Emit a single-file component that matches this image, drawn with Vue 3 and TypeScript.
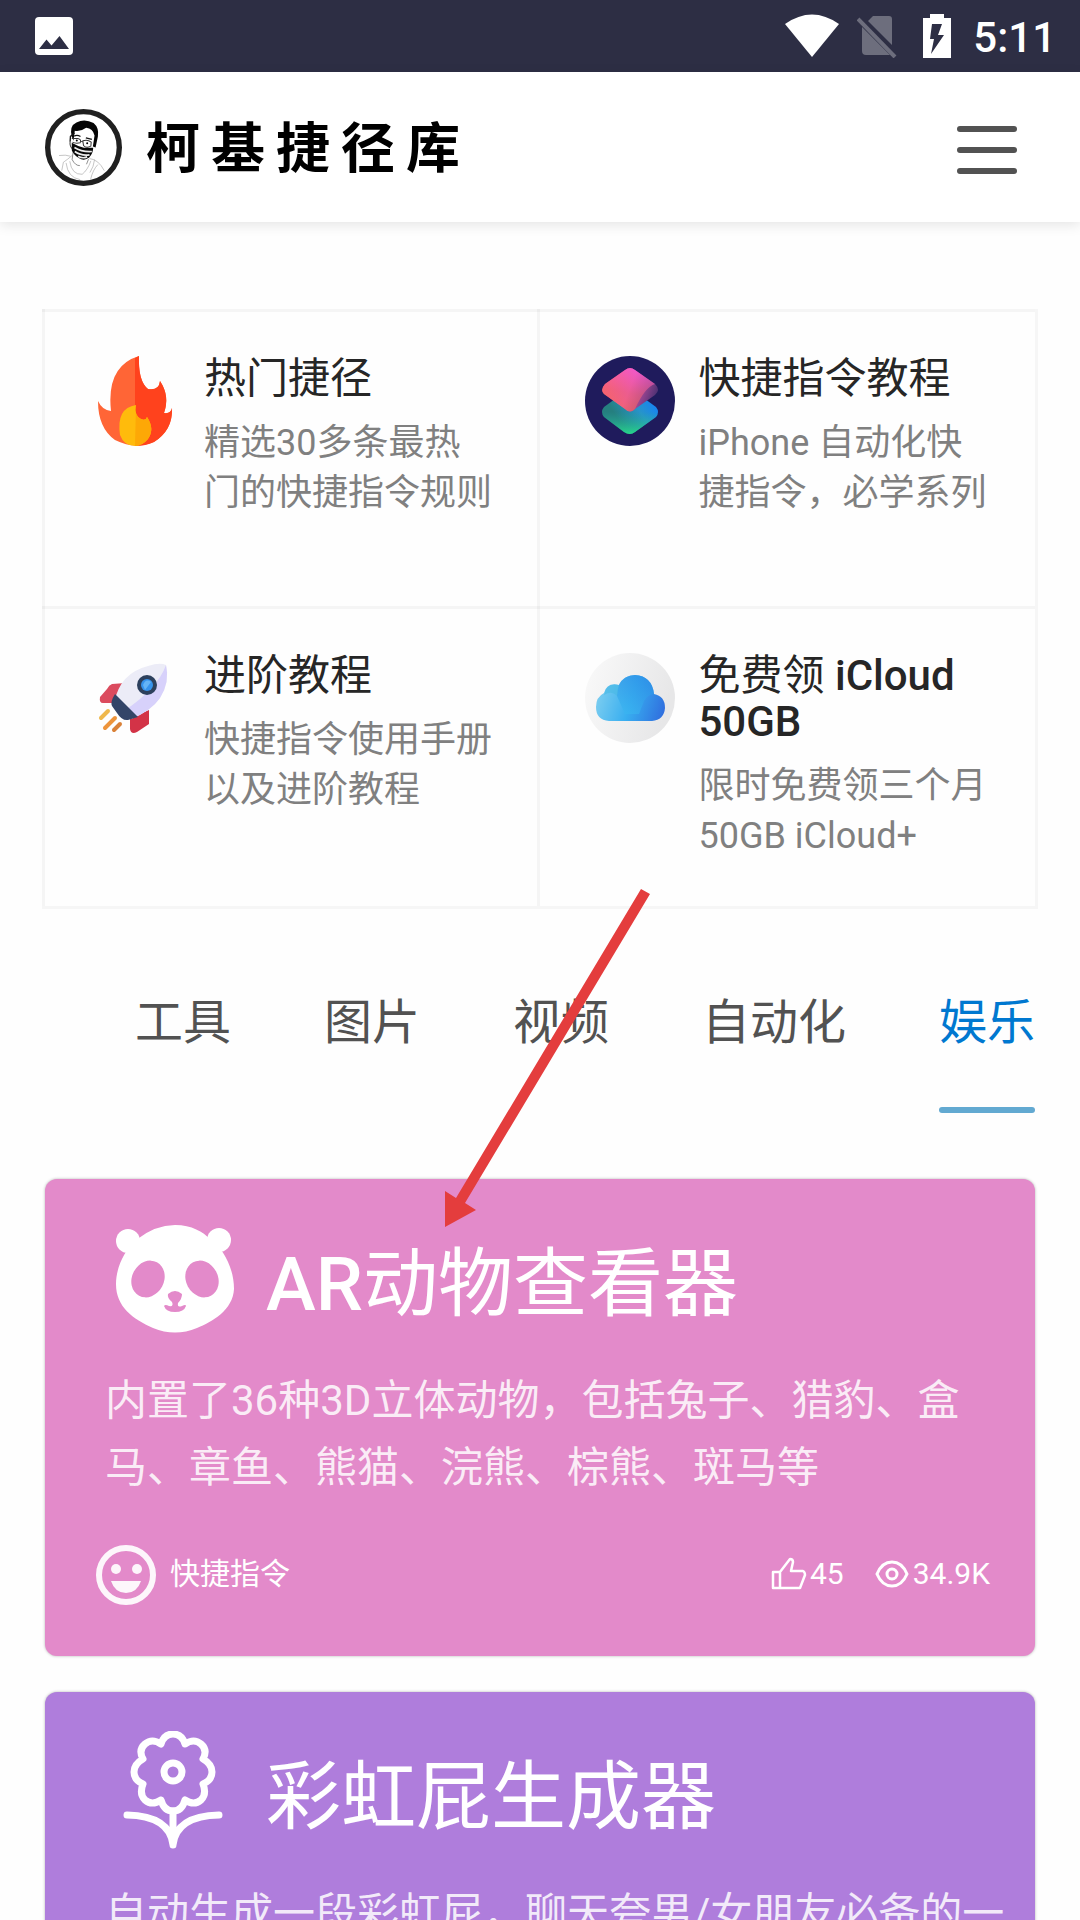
<script setup lang="ts">
import { ref } from 'vue'

interface TextPart {
  text: string
  latin?: boolean
}

interface Guide {
  icon: 'fire' | 'shortcuts' | 'rocket' | 'icloud'
  title: TextPart[]
  desc: string
}

interface Shortcut {
  icon: 'panda' | 'flower'
  tone: 'pink' | 'purple'
  title: TextPart[]
  desc: string
  author?: string
  likes?: string
  views?: string
}

const brand: string[] = ['柯', '基', '捷', '径', '库']

const guides: Guide[] = [
  { icon: 'fire', title: [{ text: '热门捷径' }], desc: '精选30多条最热门的快捷指令规则' },
  { icon: 'shortcuts', title: [{ text: '快捷指令教程' }], desc: 'iPhone 自动化快捷指令，必学系列' },
  { icon: 'rocket', title: [{ text: '进阶教程' }], desc: '快捷指令使用手册以及进阶教程' },
  {
    icon: 'icloud',
    title: [{ text: '免费领 ' }, { text: 'iCloud ', latin: true }, { text: '50GB', latin: true }],
    desc: '限时免费领三个月 50GB iCloud+',
  },
]

const tabs: string[] = ['工具', '图片', '视频', '自动化', '娱乐']
const activeTab = ref('娱乐')

const shortcuts: Shortcut[] = [
  {
    icon: 'panda',
    tone: 'pink',
    title: [{ text: 'AR', latin: true }, { text: '动物查看器' }],
    desc: '内置了36种3D立体动物，包括兔子、猎豹、盒马、章鱼、熊猫、浣熊、棕熊、斑马等',
    author: '快捷指令',
    likes: '45',
    views: '34.9K',
  },
  {
    icon: 'flower',
    tone: 'purple',
    title: [{ text: '彩虹屁生成器' }],
    desc: '自动生成一段彩虹屁，聊天夸男/女朋友必备的一',
  },
]
</script>

<template>
  <div class="page">
    <div class="status">
      <svg class="status-photo" viewBox="0 0 38 38" aria-hidden="true">
        <rect width="38" height="38" rx="4" fill="#fff" />
        <path d="M4 32 11.500 22.500 16.500 28.500 24.500 19 34 32Z" fill="#2d2e44" />
      </svg>
      <div class="status-right">
        <svg class="wifi" viewBox="0 0 54 44" aria-hidden="true">
          <path d="M0 10Q27-9 54 10L27 43Z" fill="#fff" />
        </svg>
        <svg class="sim" viewBox="0 0 40 44" aria-hidden="true">
          <path d="M11 7 16 2H32Q35 2 35 5V31ZM5 13 33 41H9Q5 41 5 37Z" fill="#6d6e7d" />
          <path d="M1 5 38 43" stroke="#6d6e7d" stroke-width="4" />
        </svg>
        <svg class="battery" viewBox="0 0 28 44" aria-hidden="true">
          <path d="M7 0H21V4H28V44H0V4H7Z" fill="#fff" />
          <path d="M9 10H19L15 21H21L8 40 11 25H7Z" fill="#2d2e44" />
        </svg>
        <span class="clock">5:11</span>
      </div>
    </div>

    <header class="header">
      <a class="brand" href="#">
        <svg class="avatar" viewBox="0 0 230 230" aria-hidden="true">
          <circle cx="115" cy="115" r="107" fill="#fff" stroke="#202020" stroke-width="16" />
          <path d="M42 139Q62 136 76 141M82 138Q66 152 55 159L50 184M133 148Q160 151 177 184M148 151Q146 172 134 190M74 156Q80 197 111 195 127 183 137 155M63 161Q68 205 105 211M158 166Q143 181 136 211" fill="none" stroke="#aaa" stroke-width="2" />
          <path d="M84 129 81 151Q91 170 104 169M130 150 124 165" fill="none" stroke="#555" stroke-width="2" />
          <path d="M80 82Q72 50 94 40 119 28 145 42 162 56 158 82L151 115 143 112 148 79Q143 58 123 56 107 68 89 65L85 95Z" fill="#050505" />
          <path d="M75 98 76 82 88 72M87 81Q96 76 106 82M122 86 140 91" fill="none" stroke="#151515" stroke-width="4" />
          <path d="M75 98Q73 112 83 120M80 88H98Q110 91 105 101 91 104 82 99M113 95Q127 90 138 99L137 111Q123 118 115 109ZM106 96 114 99" fill="none" stroke="#333" stroke-width="3" />
          <circle cx="95" cy="94" r="3" /><circle cx="126" cy="102" r="3" />
          <path d="M80 101Q99 112 116 116L144 116Q144 132 132 145 116 157 101 146 84 136 80 123Z" fill="#080808" />
          <path d="M88 115Q110 129 140 127M89 127Q109 141 133 137M99 141Q112 149 126 143" stroke="#eee" stroke-width="5" fill="none" />
        </svg>
        <span class="brand-name"><span v-for="char in brand" :key="char">{{ char }}</span></span>
      </a>
      <button class="menu" type="button" aria-label="菜单">
        <span></span><span></span><span></span>
      </button>
    </header>

    <main class="main">
      <section class="guides">
        <a v-for="guide in guides" :key="guide.icon" class="guide" href="#">
          <svg v-if="guide.icon === 'fire'" class="guide-icon" viewBox="0 0 90 90" aria-hidden="true">
            <path d="M49 0Q48 25 58 33 69 35 70 25 80 40 74 57 81 58 82 52 83 74 64 86 45 94 25 84 8 72 8 45 12 54 21 55 16 10 49 0Z" fill="#ff6536" />
            <path d="M49 0Q48 25 58 33 69 35 70 25 80 40 74 57 81 58 82 52 83 74 64 86 56 90 45 90V2Z" fill="#ff421d" />
            <path d="M46 49Q44 60 51 63 56 65 57 61 65 73 58 83 52 90 45 90 34 90 30 79 26 52 46 49Z" fill="#ffbb0c" />
            <path d="M46 49Q44 60 51 63 56 65 57 61 65 73 58 83 52 90 45 90Z" fill="#fda806" />
          </svg>
          <svg v-else-if="guide.icon === 'shortcuts'" class="guide-icon" viewBox="0 0 90 90" aria-hidden="true">
            <defs>
              <linearGradient id="sc-top" x1="0" y1="0.300" x2="1" y2="0.600">
                <stop offset="0" stop-color="#ff6658" /><stop offset="0.500" stop-color="#e557ad" /><stop offset="1" stop-color="#473071" />
              </linearGradient>
              <linearGradient id="sc-warm" x1="0.500" y1="0" x2="0.300" y2="1">
                <stop offset="0" stop-color="#f858df" /><stop offset="0.550" stop-color="#f0607c" /><stop offset="1" stop-color="#fb6a50" />
              </linearGradient>
              <linearGradient id="sc-bottom" x1="1" y1="0.200" x2="0.250" y2="0.600">
                <stop offset="0" stop-color="#117dff" /><stop offset="0.500" stop-color="#2794ca" /><stop offset="1" stop-color="#257f7f" />
              </linearGradient>
              <linearGradient id="sc-green" x1="0.500" y1="0.500" x2="0.500" y2="1">
                <stop offset="0" stop-color="#25a9a0" stop-opacity="0" /><stop offset="1" stop-color="#27d789" />
              </linearGradient>
            </defs>
            <circle cx="45" cy="45" r="45" fill="#1f1b5c" />
            <path d="M41 35Q45 32 49 35L71 51Q75 56 71 61L50 76Q45 80 39 76L19 61Q15 56 19 51Z" fill="url(#sc-bottom)" />
            <path d="M41 35Q45 32 49 35L71 51Q75 56 71 61L50 76Q45 80 39 76L19 61Q15 56 19 51Z" fill="url(#sc-green)" />
            <path d="M40 14Q45 10 50 14L70 28Q76 34 70 39L50 53Q45 58 40 53L19 38Q15 34 20 28Z" fill="url(#sc-top)" />
            <path d="M40 14Q45 10 50 14L70 28Q60 31 50 53 45 58 40 53L19 38Q15 34 20 28Z" fill="url(#sc-warm)" opacity="0.600" />
          </svg>
          <svg v-else-if="guide.icon === 'rocket'" class="guide-icon" viewBox="0 0 90 90" aria-hidden="true">
            <path d="M36 30 22 31Q19 32 17 36L10 44Q9 50 13 50L24 50Z" fill="#db4b5e" />
            <path d="M59 57V71L47 79Q41 82 40 76L40 65Z" fill="#d33347" />
            <path d="M24 50Q30 20 58 13 70 9 76 12 80 29 70 45 61 58 41 66Z" fill="#ececf7" />
            <path d="M76 12Q80 29 70 45 61 58 41 66L34 58Q68 35 76 12Z" fill="#d7d1fb" />
            <path d="M25 41 48 64 38 67Q32 68 27 60L22 53Q20 49 25 41Z" fill="#334568" />
            <circle cx="57" cy="32" r="10" fill="#2d405d" />
            <circle cx="57" cy="32" r="6" fill="#3793ed" />
            <path d="M53 32Q56 25 61 29L55 37Z" fill="#65b4f6" />
            <path d="M18 58 11 65" stroke="#efb84c" stroke-width="4" stroke-linecap="round" />
            <path d="M25 65 15 75" stroke="#ed943b" stroke-width="4" stroke-linecap="round" />
            <path d="M30 71 24 77" stroke="#d98138" stroke-width="4" stroke-linecap="round" />
          </svg>
          <svg v-else class="guide-icon" viewBox="0 0 90 90" aria-hidden="true">
            <defs>
              <linearGradient id="ic-back" x1="0" y1="0" x2="1" y2="0.300">
                <stop offset="0" stop-color="#fafafa" /><stop offset="1" stop-color="#e7e7e8" />
              </linearGradient>
              <linearGradient id="ic-cloud" x1="0" y1="0.500" x2="1" y2="0.700">
                <stop offset="0" stop-color="#7bcdf0" /><stop offset="0.500" stop-color="#38aef0" /><stop offset="1" stop-color="#3070df" />
              </linearGradient>
              <linearGradient id="ic-puff" x1="0.200" y1="1" x2="0.600" y2="0">
                <stop offset="0" stop-color="#3ab6f0" /><stop offset="1" stop-color="#2c8ee7" />
              </linearGradient>
            </defs>
            <circle cx="45" cy="45" r="45" fill="url(#ic-back)" />
            <path d="M24 68Q11 67 11 54 11 44 19 40 22 29 34 32 39 22 50 22 67 23 69 41 80 43 80 55 79 67 67 68Z" fill="url(#ic-cloud)" />
            <path d="M32 43Q32 23 50 22 67 23 69 41 62 42 59 48L54 61H40Z" fill="url(#ic-puff)" opacity="0.700" />
            <path d="M19 42Q21 29 34 32L32 43Q27 37 19 42Z" fill="#48b9e5" opacity="0.600" />
          </svg>
          <div class="guide-text">
            <h3 class="guide-title"><span v-for="part in guide.title" :key="part.text" :class="{ latin: part.latin }">{{ part.text }}</span></h3>
            <p class="guide-desc">{{ guide.desc }}</p>
          </div>
        </a>
      </section>

      <nav class="tabs">
        <button
          v-for="tab in tabs"
          :key="tab"
          type="button"
          class="tab"
          :class="{ active: tab === activeTab }"
          @click="activeTab = tab"
        >{{ tab }}</button>
      </nav>

      <section class="cards">
        <article v-for="item in shortcuts" :key="item.icon" class="card" :class="item.tone">
          <div class="card-head">
            <svg v-if="item.icon === 'panda'" class="card-icon" viewBox="0 0 120 120" aria-hidden="true">
              <g fill="#fff">
                <circle cx="13" cy="23" r="12" /><circle cx="104" cy="22" r="12" />
                <path d="M60 7C77 7 88 14 95 21 108 30 119 50 119 71 118 92 97 104 82 110Q60 119 38 110C18 101 1 89 1 66 1 50 9 33 21 22Q40 7 60 7Z" />
              </g>
              <g fill="#e38aca">
                <ellipse cx="33" cy="61" rx="16" ry="19" transform="rotate(28 33 61)" />
                <ellipse cx="87" cy="61" rx="16" ry="19" transform="rotate(-28 87 61)" />
                <path d="M53 76Q60 70 67 76 67 81 63 85 62 90 67 88 71 86 71 88 69 94 60 94 51 94 49 88 50 86 54 88 59 89 57 84 52 80 53 76Z" />
              </g>
            </svg>
            <svg v-else class="card-icon" viewBox="0 0 120 120" aria-hidden="true">
              <g fill="none" stroke="#fff" stroke-width="7" stroke-linecap="round" stroke-linejoin="round">
                <path d="M46 13Q49 3 58 3 67 3 70 13 79 7 86 13 93 19 88 28 97 33 97 41 97 49 88 53 92 63 86 69 79 75 70 69 67 80 58 80 49 80 46 69 37 75 30 69 24 63 28 53 19 49 19 41 19 33 28 28 23 19 30 13 37 7 46 13Z" />
                <circle cx="58" cy="41" r="9" />
                <path d="M58 80V114M12 84Q55 85 58 114 61 85 104 84" />
              </g>
            </svg>
            <h2 class="card-title"><span v-for="part in item.title" :key="part.text" :class="{ latin: part.latin }">{{ part.text }}</span></h2>
          </div>
          <p class="card-desc">{{ item.desc }}</p>
          <footer v-if="item.author" class="card-foot">
            <svg class="smile" viewBox="0 0 60 60" aria-hidden="true">
              <circle cx="30" cy="30" r="27" fill="none" stroke="#fdf6fb" stroke-width="6" />
              <g fill="#fdf6fb">
                <circle cx="20" cy="24" r="5" /><circle cx="41" cy="24" r="5" />
                <path d="M15 36H45Q41 48 30 48T15 36Z" />
              </g>
            </svg>
            <span class="author">{{ item.author }}</span>
            <span class="stat">
              <svg viewBox="0 0 36 36" aria-hidden="true">
                <path d="M2 16H9L19 3Q22 3 22 6L20 15H32Q34 16 34 19L29 32H2ZM9 16V32" fill="none" stroke="#fff" stroke-width="2.500" stroke-linejoin="round" />
              </svg>{{ item.likes }}
            </span>
            <span class="stat">
              <svg viewBox="0 0 36 36" aria-hidden="true">
                <path d="M3 18Q8 6 18 6T33 18Q28 30 18 30T3 18Z" fill="none" stroke="#fff" stroke-width="3" />
                <circle cx="18" cy="18" r="5" fill="none" stroke="#fff" stroke-width="3" />
              </svg>{{ item.views }}
            </span>
          </footer>
        </article>
      </section>
    </main>

    <svg class="pointer" viewBox="0 0 206 340" aria-hidden="true">
      <path d="M196 0 205 5 20 314 31 321 0 338V302L11 309Z" fill="#e43d3d" />
    </svg>
  </div>
</template>

<style>
body {
  background: #fefefe;
}
</style>

<style scoped>
.page {
  position: relative;
  height: 100vh;
  overflow: hidden;
  font-family: Roboto, "Noto Sans CJK SC", sans-serif;
  color: #262626;
}

.status {
  display: flex;
  align-items: center;
  justify-content: space-between;
  height: 72px;
  padding: 0 24px 0 35px;
  background: #2d2e44;
}

.status-photo {
  width: 38px;
  height: 38px;
}

.status-right {
  display: flex;
  align-items: center;
}

.wifi {
  width: 54px;
  height: 44px;
  margin-right: 18px;
}

.sim {
  width: 40px;
  height: 44px;
  margin-right: 26px;
}

.battery {
  width: 28px;
  height: 44px;
  margin-right: 22px;
}

.clock {
  padding-top: 4px;
  font-size: 42px;
  line-height: 68px;
  font-weight: 500;
  color: #fff;
}

.header {
  display: flex;
  align-items: center;
  justify-content: space-between;
  height: 150px;
  padding: 0 63px 0 45px;
  background: #fff;
  box-shadow: 0 3px 12px rgba(0, 0, 0, 0.1);
}

.brand {
  display: flex;
  align-items: center;
  gap: 24px;
  color: #000;
  text-decoration: none;
}

.avatar {
  width: 77px;
  height: 77px;
}

.brand-name {
  display: flex;
  gap: 11px;
  padding-top: 6px;
  font-size: 54px;
  line-height: 72px;
  font-weight: 700;
}

.menu {
  display: flex;
  flex-direction: column;
  gap: 15px;
  padding: 6px 0 0;
  border: 0;
  background: none;
}

.menu span {
  width: 60px;
  height: 6px;
  border-radius: 3px;
  background: #525252;
}

.main {
  padding: 87px 42px 0;
}

.guides {
  display: grid;
  grid-template-columns: calc(50% - 2px) 1fr;
  grid-template-rows: minmax(297px, auto) minmax(300px, auto);
  border-right: 3px solid #f6f6f6;
  border-bottom: 3px solid #f6f6f6;
}

.guide {
  display: flex;
  gap: 24px;
  padding: 47px 44px 24px 48px;
  box-shadow: inset 3px 0 rgba(0, 0, 0, 0.035), inset 0 3px rgba(0, 0, 0, 0.035);
  color: inherit;
  text-decoration: none;
}

.guide-icon {
  flex: none;
  width: 90px;
  height: 90px;
}

.guide-title {
  margin: 0;
  font-size: 42px;
  line-height: 46px;
  font-weight: 400;
}

.latin {
  font-weight: 500;
}

.guide-desc {
  margin: 16px 0 0;
  font-size: 36px;
  line-height: 50px;
  color: #808080;
}

.tabs {
  display: flex;
  justify-content: flex-end;
  gap: 93px;
  padding: 84px 3px 66px;
}

.tab {
  position: relative;
  padding: 0 0 60px;
  border: 0;
  background: none;
  font-family: inherit;
  font-size: 48px;
  line-height: 60px;
  color: #525252;
}

.tab.active {
  color: #0078d0;
}

.tab.active::after {
  content: "";
  position: absolute;
  left: 0;
  right: 0;
  bottom: 0;
  height: 6px;
  border-radius: 3px;
  background: #62a9d1;
}

.cards {
  display: flex;
  flex-direction: column;
  gap: 36px;
  padding: 0 3px;
}

.card {
  padding: 39px 30px 51px 60px;
  border-radius: 12px;
  box-shadow: 0 0 3px rgba(0, 0, 0, 0.3);
  color: #fff;
}

.pink {
  background: #e38aca;
}

.purple {
  background: #af7ddc;
}

.card-head {
  display: flex;
  align-items: flex-end;
  gap: 31px;
  padding-left: 10px;
}

.card-icon {
  width: 120px;
  height: 120px;
}

.card-title {
  margin: 0;
  font-size: 75px;
  line-height: 108px;
  font-weight: 400;
}

.card-desc {
  margin: 29px 0 0;
  font-size: 42px;
  line-height: 67px;
  color: rgba(255, 255, 255, 0.85);
}

.card-foot {
  display: flex;
  align-items: flex-start;
  margin: 44px 15px 0 -9px;
  font-size: 30px;
  line-height: 58px;
}

.smile {
  width: 60px;
  height: 60px;
  margin-right: 14px;
}

.author {
  margin-right: auto;
}

.stat {
  display: flex;
  align-items: center;
  gap: 3px;
  margin-left: 30px;
}

.stat svg {
  width: 36px;
  height: 36px;
}

.pointer {
  position: absolute;
  top: 889px;
  left: 445px;
  width: 206px;
  height: 340px;
  pointer-events: none;
}
</style>
